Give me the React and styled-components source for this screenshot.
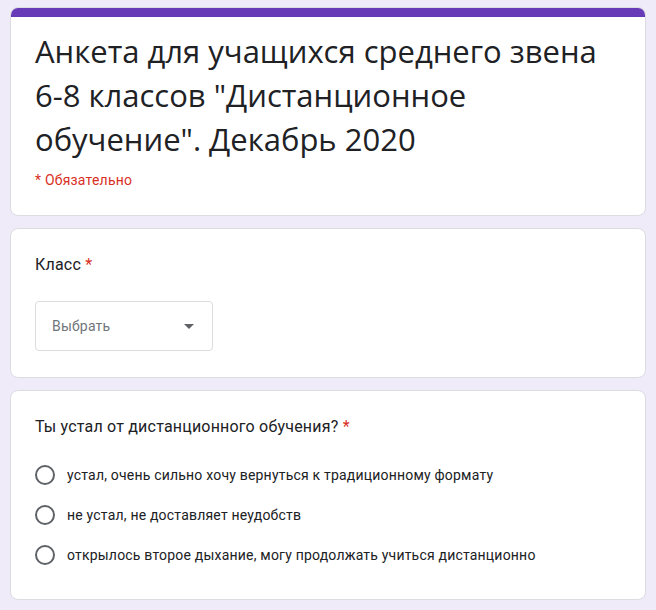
import React from "react";
import styled, { createGlobalStyle } from "styled-components";

const Global = createGlobalStyle`
  html, body {
    margin: 0;
    padding: 0;
    background: #f0ebf8;
  }
  body {
    font-family: Roboto, "Liberation Sans", sans-serif;
    color: #202124;
  }
`;

const Page = styled.div`
  display: flex;
  flex-direction: column;
  gap: 12px;
  padding: 7px 10px 10px;
`;

const Card = styled.div`
  background: #fff;
  border: 1px solid #dadce0;
  border-radius: 8px;
  overflow: hidden;
`;

const HeaderBar = styled.div`
  height: 10px;
  background: #673ab7;
  margin: -1px -1px 0;
`;

const HeaderBody = styled.div`
  padding: 12px 24px 27px;
`;

const Title = styled.h1`
  margin: 0;
  font-family: "Open Sans", sans-serif;
  font-weight: 400;
  font-size: 31px;
  line-height: 44px;
  color: #202124;
`;

const Required = styled.div`
  margin-top: 11px;
  font-size: 14px;
  letter-spacing: 0.2px;
  color: #d93025;
`;

const Question = styled.div`
  padding: 24px 24px ${(p) => p.$bottom || "24px"};
  display: flex;
  flex-direction: column;
`;

const QTitle = styled.div`
  font-size: 16px;
  line-height: 24px;
  letter-spacing: 0.2px;
  color: #202124;
  span {
    color: #d93025;
  }
`;

const Select = styled.div`
  margin-top: 24px;
  width: 178px;
  height: 50px;
  box-sizing: border-box;
  border: 1px solid #dadce0;
  border-radius: 4px;
  display: flex;
  align-items: center;
  justify-content: space-between;
  padding: 0 18px 0 16px;
  font-size: 14px;
  letter-spacing: 0.2px;
  color: #70757a;
`;

const Caret = styled.div`
  width: 0;
  height: 0;
  border-left: 5px solid transparent;
  border-right: 5px solid transparent;
  border-top: 5px solid #5f6368;
`;

const Options = styled.div`
  margin-top: 24px;
  display: flex;
  flex-direction: column;
  gap: 16px;
`;

const Option = styled.label`
  display: flex;
  align-items: center;
  gap: 12px;
  font-size: 14px;
  line-height: 24px;
  letter-spacing: 0.2px;
  color: #202124;
`;

const Radio = styled.span`
  width: 20px;
  height: 20px;
  box-sizing: border-box;
  border: 2px solid #5f6368;
  border-radius: 50%;
  flex: none;
`;

const options = [
  "устал, очень сильно хочу вернуться к традиционному формату",
  "не устал, не доставляет неудобств",
  "открылось второе дыхание, могу продолжать учиться дистанционно",
];

export default function App() {
  return (
    <>
      <Global />
      <Page>
        <Card>
          <HeaderBar />
          <HeaderBody>
            <Title>
              Анкета для учащихся среднего звена 6-8 классов "Дистанционное
              обучение". Декабрь 2020
            </Title>
            <Required>* Обязательно</Required>
          </HeaderBody>
        </Card>
        <Card>
          <Question $bottom="26px">
            <QTitle>
              Класс <span>*</span>
            </QTitle>
            <Select>
              Выбрать
              <Caret />
            </Select>
          </Question>
        </Card>
        <Card>
          <Question $bottom="32px">
            <QTitle>
              Ты устал от дистанционного обучения? <span>*</span>
            </QTitle>
            <Options>
              {options.map((o) => (
                <Option key={o}>
                  <Radio />
                  {o}
                </Option>
              ))}
            </Options>
          </Question>
        </Card>
      </Page>
    </>
  );
}
